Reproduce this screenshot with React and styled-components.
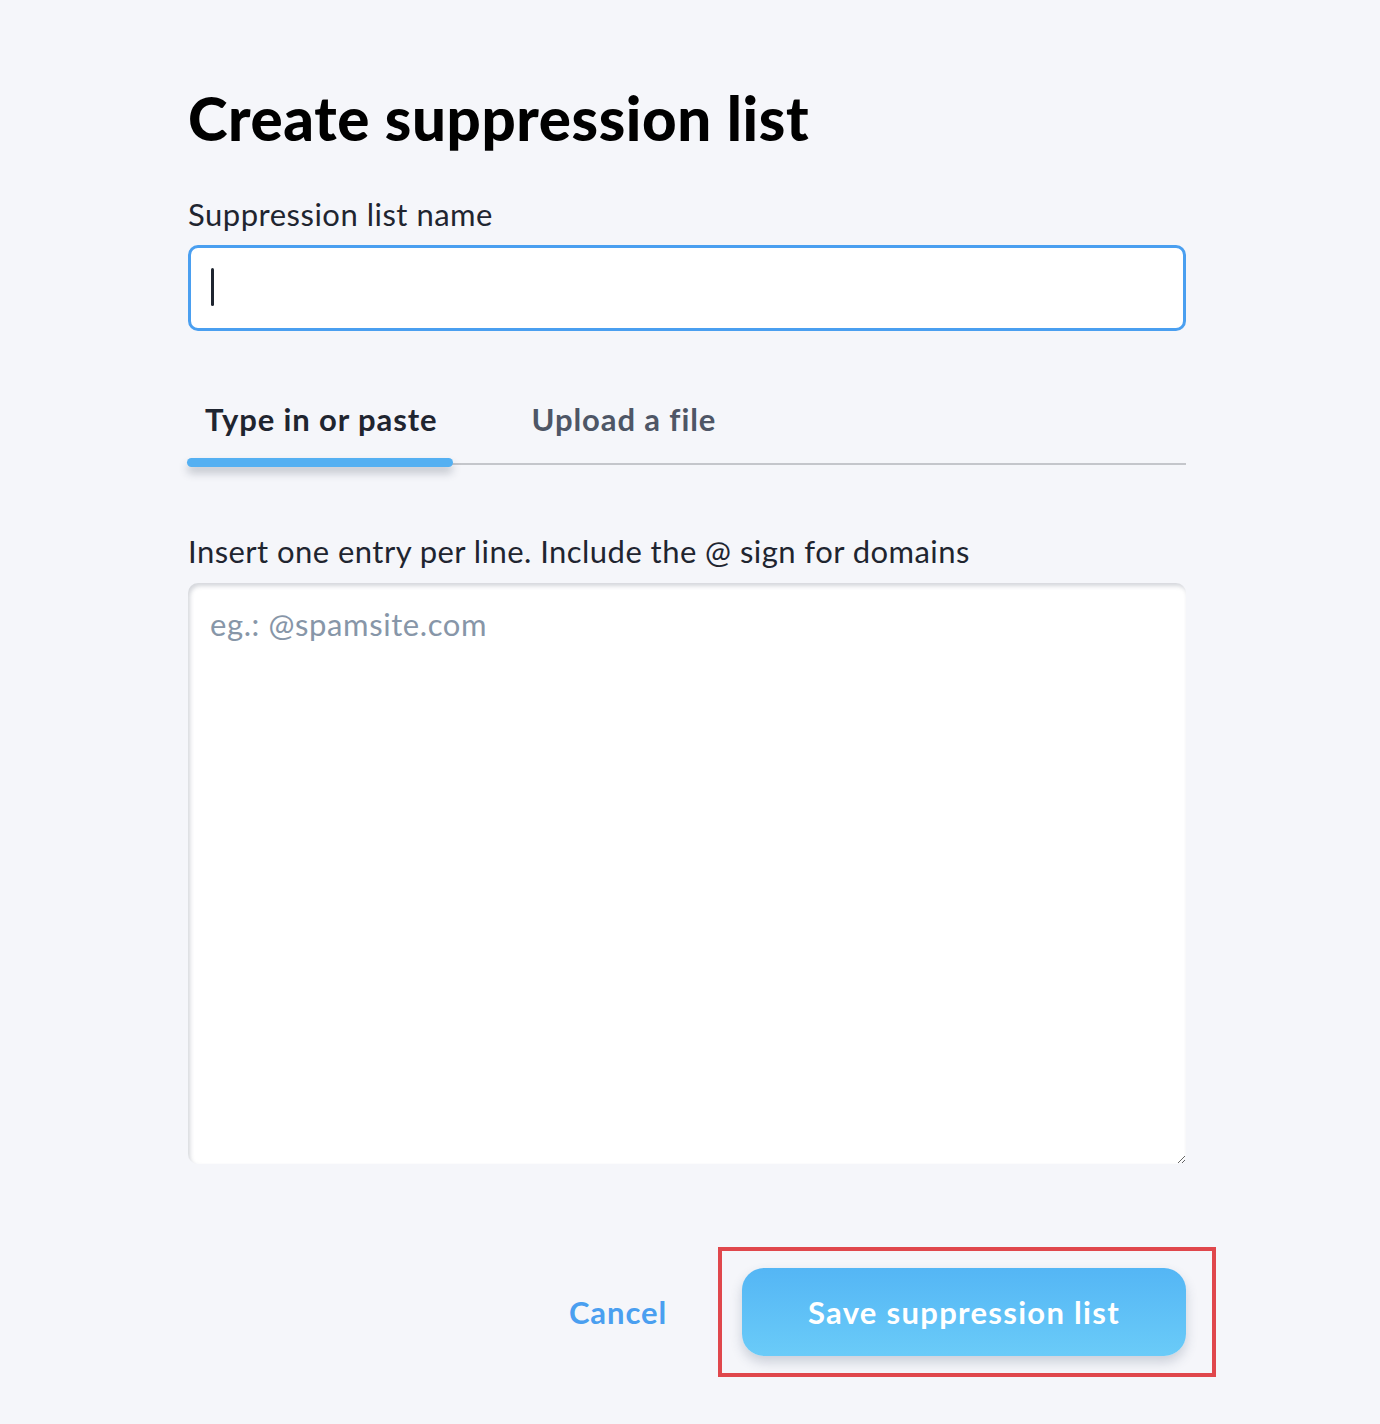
import React, { useState } from 'react';
import styled, { createGlobalStyle } from 'styled-components';

const GlobalStyle = createGlobalStyle`
  html, body {
    margin: 0;
    padding: 0;
    background: #f5f6fa;
    font-family: Lato, "Open Sans", sans-serif;
  }
`

const Page = styled.div`
  min-height: 1424px;
  background: #f5f6fa;
  padding: 84px 0 0 188px;
  box-sizing: border-box;
`

const Form = styled.div`
  width: 998px;
  display: flex;
  flex-direction: column;
`

const Title = styled.h1`
  margin: 0;
  font-size: 60px;
  font-weight: 900;
  color: #000;
  letter-spacing: 0.6px;
  line-height: 68px;
`

const Label = styled.label`
  margin-top: 44px;
  font-size: 31px;
  letter-spacing: 0.5px;
  color: #1f2530;
  line-height: 36px;
`

const Field = styled.div`
  position: relative;
  margin-top: 13px;
`

const NameInput = styled.input`
  width: 100%;
  height: 86px;
  box-sizing: border-box;
  border: 3px solid #4a9ff0;
  border-radius: 10px;
  background: #fff;
  padding: 0 22px;
  font-size: 31px;
  font-family: inherit;
  color: #1f2530;
  caret-color: transparent;
  outline: none;
`

const Caret = styled.span`
  position: absolute;
  left: 23px;
  top: 23px;
  width: 3px;
  height: 38px;
  border-radius: 2px;
  background: #1f2530;
  pointer-events: none;
`

const Tabs = styled.div`
  margin-top: 64px;
  display: flex;
  border-bottom: 2px solid #c4c6cb;
`

const Tab = styled.button`
  position: relative;
  background: none;
  border: none;
  padding: 6px 15px 26px 17px;
  margin-right: ${p => (p.$active ? '62px' : '0')};
  font-family: inherit;
  font-size: 31px;
  letter-spacing: 0.9px;
  font-weight: 700;
  color: ${p => (p.$active ? '#1f2530' : '#4e5666')};
  cursor: pointer;
  line-height: 36px;

  &::after {
    content: '';
    display: ${p => (p.$active ? 'block' : 'none')};
    position: absolute;
    left: -1px;
    right: 0;
    bottom: -4px;
    height: 9px;
    border-radius: 5px;
    background: #54b0f2;
    box-shadow: 0 6px 8px rgba(40, 50, 70, 0.25);
  }
`

const Hint = styled.p`
  margin: 68px 0 0;
  font-size: 31px;
  letter-spacing: 0.45px;
  color: #1f2530;
  line-height: 36px;
`

const Entries = styled.textarea`
  margin-top: 14px;
  height: 581px;
  box-sizing: border-box;
  border: none;
  border-radius: 10px;
  background: #fff;
  box-shadow: inset 2px 3px 4px rgba(60, 70, 90, 0.22);
  padding: 22px 22px;
  font-family: inherit;
  font-size: 31px;
  letter-spacing: 0.6px;
  color: #1f2530;
  outline: none;
  resize: vertical;

  &::placeholder {
    color: #8796a8;
  }
`

const Actions = styled.div`
  margin-top: 83px;
  display: flex;
  justify-content: flex-end;
  align-items: center;
  gap: 51px;
`

const CancelButton = styled.button`
  background: none;
  border: none;
  padding: 0;
  font-family: inherit;
  font-size: 31px;
  letter-spacing: 0.9px;
  font-weight: 700;
  color: #4a9ff0;
  cursor: pointer;
`

const Highlight = styled.div`
  margin-right: -30px;
  padding: 17px 26px 17px 20px;
  border: 4px solid #e0474c;
`

const SaveButton = styled.button`
  width: 444px;
  height: 88px;
  border: none;
  border-radius: 22px;
  background: linear-gradient(180deg, #54b6f5 0%, #6acbf8 100%);
  box-shadow: 0 6px 12px rgba(50, 70, 100, 0.22);
  color: #fff;
  font-family: inherit;
  font-size: 31px;
  letter-spacing: 1.3px;
  font-weight: 700;
  cursor: pointer;
`

export default function App() {
  const [tab, setTab] = useState('type')
  const [name, setName] = useState('')
  return (
    <>
      <GlobalStyle />
      <Page>
        <Form>
          <Title>Create suppression list</Title>
          <Label htmlFor="list-name">Suppression list name</Label>
          <Field>
            <NameInput id="list-name" value={name} onChange={e => setName(e.target.value)} />
            {name === '' && <Caret />}
          </Field>
          <Tabs>
            <Tab $active={tab === 'type'} onClick={() => setTab('type')}>Type in or paste</Tab>
            <Tab $active={tab === 'upload'} onClick={() => setTab('upload')}>Upload a file</Tab>
          </Tabs>
          <Hint>Insert one entry per line. Include the @ sign for domains</Hint>
          <Entries placeholder="eg.: @spamsite.com" />
          <Actions>
            <CancelButton>Cancel</CancelButton>
            <Highlight>
              <SaveButton>Save suppression list</SaveButton>
            </Highlight>
          </Actions>
        </Form>
      </Page>
    </>
  )
}
